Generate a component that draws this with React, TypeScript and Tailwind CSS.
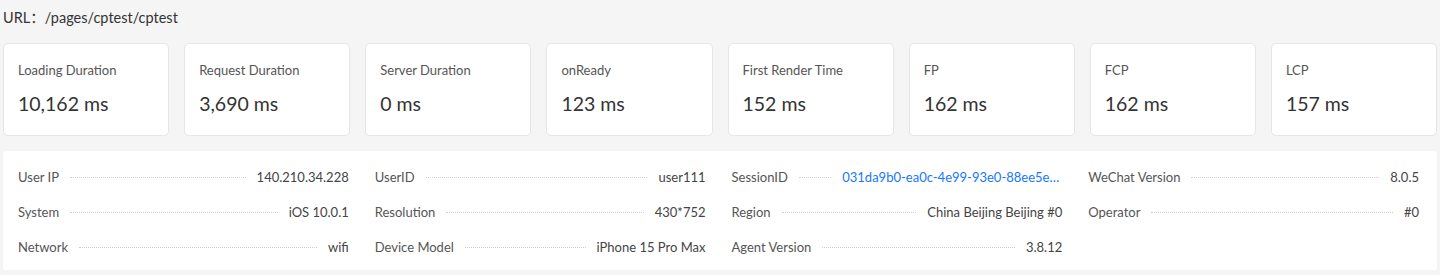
const metrics = [
  { label: 'Loading Duration', value: '10,162 ms' },
  { label: 'Request Duration', value: '3,690 ms' },
  { label: 'Server Duration', value: '0 ms' },
  { label: 'onReady', value: '123 ms' },
  { label: 'First Render Time', value: '152 ms' },
  { label: 'FP', value: '162 ms' },
  { label: 'FCP', value: '162 ms' },
  { label: 'LCP', value: '157 ms' },
];

const details: { label: string; value: string; link?: boolean }[] = [
  { label: 'User IP', value: '140.210.34.228' },
  { label: 'UserID', value: 'user111' },
  { label: 'SessionID', value: '031da9b0-ea0c-4e99-93e0-88ee5e6f21c4', link: true },
  { label: 'WeChat Version', value: '8.0.5' },
  { label: 'System', value: 'iOS 10.0.1' },
  { label: 'Resolution', value: '430*752' },
  { label: 'Region', value: 'China Beijing Beijing #0' },
  { label: 'Operator', value: '#0' },
  { label: 'Network', value: 'wifi' },
  { label: 'Device Model', value: 'iPhone 15 Pro Max' },
  { label: 'Agent Version', value: '3.8.12' },
];

export default function App() {
  return (
    <div
      className="min-h-screen bg-[#f5f5f5] px-[3px] pt-[8px] text-[#333]"
      style={{ fontFamily: 'Lato, "Noto Sans CJK SC", sans-serif' }}
    >
      <div className="h-[20px] text-[14.5px] leading-[20px] text-[#333]">URL：/pages/cptest/cptest</div>

      <div className="mt-[15px] grid grid-cols-8 gap-[15px]">
        {metrics.map((m) => (
          <div
            key={m.label}
            className="h-[93px] rounded-[5px] border border-[#e6e6e6] bg-white px-[14px] pt-[17px]"
          >
            <div className="text-[13px] leading-[18px] text-[#555]">{m.label}</div>
            <div className="mt-[12px] text-[19.5px] leading-[26px] text-[#333]">{m.value}</div>
          </div>
        ))}
      </div>

      <div className="mt-[15px] grid grid-cols-4 gap-x-[26px] rounded-[3px] bg-white pb-[5px] pl-[15px] pr-[18px] pt-[9px]">
        {details.map((d) => (
          <div key={d.label} className="flex h-[35px] items-center text-[13px] text-[#555]">
            <span className="shrink-0">{d.label}</span>
            <span className="mx-[11px] h-0 min-w-[20px] flex-1 border-t border-dotted border-[#d0d0d0]" />
            <span
              className={
                d.link
                  ? 'max-w-[220px] truncate text-[#1677ff]'
                  : 'shrink-0 text-[#444]'
              }
            >
              {d.value}
            </span>
          </div>
        ))}
      </div>
    </div>
  );
}
